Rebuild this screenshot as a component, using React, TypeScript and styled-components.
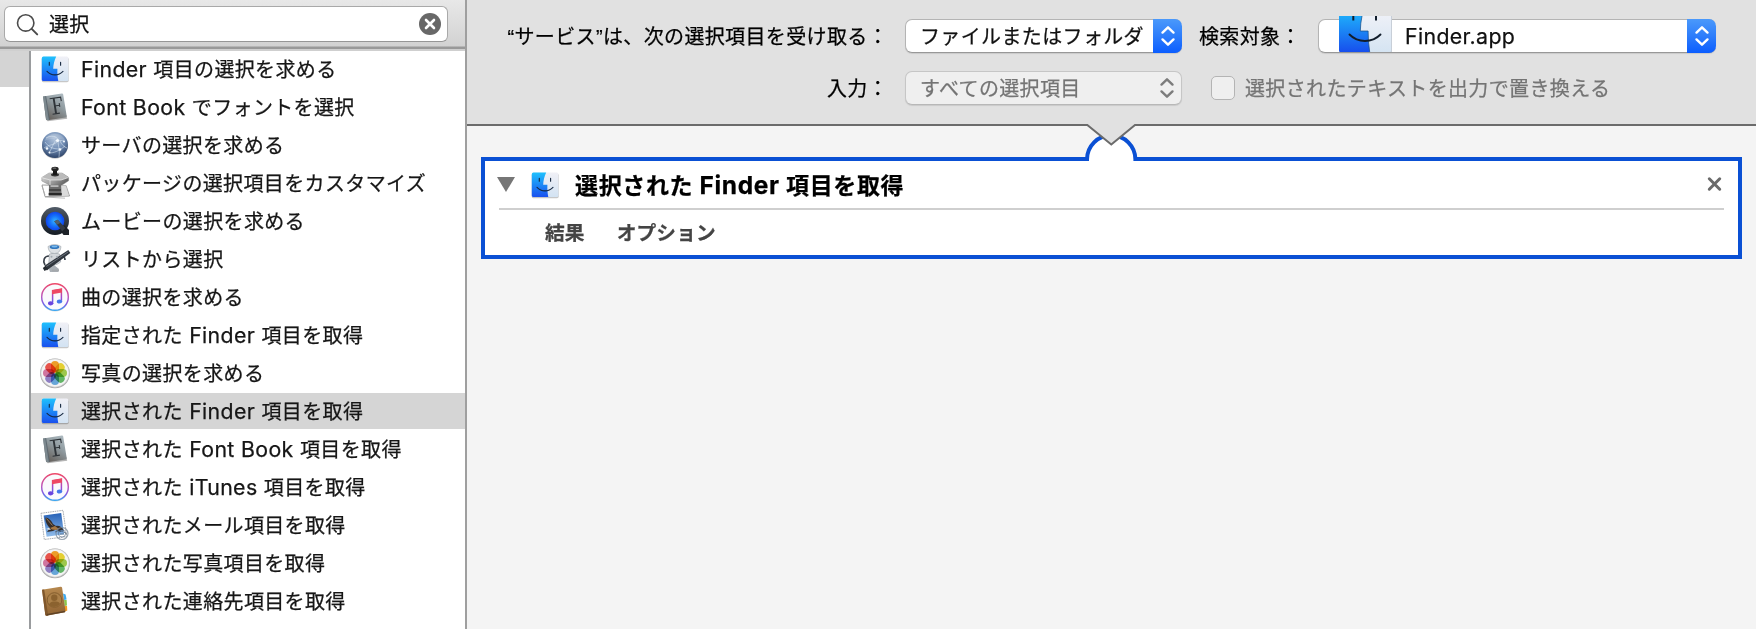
import React from "react";
import styled, { createGlobalStyle } from "styled-components";

const Global = createGlobalStyle`
  * { box-sizing: border-box; }
  body { margin: 0; overflow: hidden; background: #f4f4f4; }
`;

const Window = styled.div`
  display: grid;
  grid-template-columns: 467px 1fr;
  width: 1756px;
  height: 629px;
  overflow: hidden;
  color: #161616;
  font-family: Inter, "Noto Sans CJK JP", sans-serif;
  font-size: 20px;
  letter-spacing: 0.36px;
  white-space: pre;
  -webkit-text-stroke: 0.25px currentColor;
`;

const Latin = styled.span`
  font-size: 1.065em;
`;

const Quote = styled.span`
  font-family: "Liberation Sans", sans-serif;
`;

const Sidebar = styled.aside`
  display: flex;
  flex-direction: column;
  min-height: 0;
  border-right: 2px solid #9f9f9f;
  background: #fff;
`;

const SearchBar = styled.div`
  flex: none;
  height: 51px;
  padding: 6px 17px 0 4px;
  background: linear-gradient(#e8e8e8, #d2d2d2 46px, #999 47px, #999 49px, #cfcfcf 49px);
`;

const SearchField = styled.div`
  display: flex;
  align-items: center;
  height: 36px;
  padding: 0 6px 0 11px;
  border: 1px solid #a9a9a9;
  border-bottom-color: #969696;
  border-radius: 6px;
  background: #fff;
`;

const SearchText = styled.span`
  flex: 1;
  margin: 2px 0 0 10px;
  line-height: 30px;
  color: #111;
`;

const Columns = styled.div`
  flex: 1;
  display: grid;
  grid-template-columns: 31px 1fr;
`;

const Gutter = styled.div`
  border-right: 2px solid #9a9c9e;
`;

const GutterSelection = styled.div`
  height: 36px;
  background: #d4d4d4;
`;

const List = styled.ul`
  display: flex;
  flex-direction: column;
  gap: 2px;
  margin: 0;
  padding: 0;
  list-style: none;
`;

const Item = styled.li<{ $selected: boolean }>`
  display: flex;
  align-items: center;
  gap: 12px;
  height: 36px;
  padding-left: 10px;
  line-height: 36px;
  background: ${(p) => (p.$selected ? "#d5d5d5" : "transparent")};
`;

const ItemLabel = styled.span`
  padding-top: 1px;
`;

const Glyph = styled.svg`
  display: block;
  flex: none;
  overflow: visible;
`;

const Main = styled.main`
  display: flex;
  flex-direction: column;
  background: #f4f4f4;
`;

const Header = styled.header`
  display: flex;
  flex-direction: column;
  gap: 18px;
  height: 126px;
  padding-top: 19px;
  background: #e1e1e1;
  border-bottom: 2px solid #6b6b6b;
  color: #000;
`;

const FormRow = styled.div`
  display: flex;
  align-items: center;
  height: 34px;
  line-height: 34px;
`;

const FieldLabel = styled.span`
  width: 421px;
  margin-right: 17px;
  padding-top: 1px;
  text-align: right;
`;

const ScopeLabel = styled.span`
  width: 103px;
  margin: 1px 16px 0 17px;
`;

const Popup = styled.div<{ $width: number; $disabled?: boolean }>`
  display: flex;
  align-items: center;
  justify-content: space-between;
  width: ${(p) => p.$width}px;
  height: 34px;
  padding-left: 14px;
  border: 1px solid ${(p) => (p.$disabled ? "#c6c6c6" : "#b4b4b4")};
  border-bottom-color: ${(p) => (p.$disabled ? "#b8b8b8" : "#989898")};
  border-right-width: ${(p) => (p.$disabled ? 1 : 0)}px;
  border-radius: 7px;
  background: ${(p) => (p.$disabled ? "#efefef" : "#fff")};
  color: ${(p) => (p.$disabled ? "#747474" : "#111")};
  box-shadow: 0 1px 1px rgba(0, 0, 0, 0.1);
`;

const PopupText = styled.span`
  padding-top: 1px;
`;

const AppChoice = styled.span`
  display: flex;
  align-items: flex-end;
  gap: 12px;
  height: 36px;
  margin: -4px 0 0 6px;
`;

const AppName = styled(Latin)`
  margin-bottom: -1px;
`;

const Stepper = styled.span<{ $disabled?: boolean }>`
  display: flex;
  align-items: center;
  justify-content: center;
  width: 29px;
  height: 34px;
  margin: -1px 0;
  border-radius: 0 7px 7px 0;
  color: ${(p) => (p.$disabled ? "#7c7c7c" : "#fff")};
  background: ${(p) => (p.$disabled ? "none" : "linear-gradient(#4a99fb, #2d7dfb 50%, #0b5dff)")};
`;

const Checkbox = styled.span`
  width: 24px;
  height: 24px;
  margin: 0 10px 0 29px;
  border: 1px solid #b4b4b4;
  border-radius: 5px;
  background: #efefef;
`;

const CheckLabel = styled.span`
  padding-top: 1px;
  color: #747474;
`;

const Canvas = styled.section`
  position: relative;
  flex: 1;
  padding: 31px 14px 0;
`;

const Connector = styled.svg`
  position: absolute;
  left: 616px;
  top: -2px;
  z-index: 1;
`;

const Card = styled.article`
  height: 102px;
  border: 4px solid #0a50d4;
  background: #fff;
  padding: 0 14px;
`;

const CardHead = styled.div`
  display: flex;
  align-items: center;
  height: 49px;
  padding: 0 2px 0 0;
  border-bottom: 2px solid #cfcfcf;
`;

const CardTitle = styled.h1`
  flex: 1;
  margin: 2px 0 0 16px;
  font-size: 23px;
  line-height: 40px;
  font-weight: 700;
  letter-spacing: 0.63px;
  color: #000;
`;

const CardTabs = styled.div`
  display: flex;
  gap: 32px;
  padding: 1px 0 0 46px;
  line-height: 45px;
  font-size: 19.7px;
  letter-spacing: 0.15px;
  font-weight: 700;
  color: #444;
`;

const FinderArt = ({ size = 28 }: { size?: number }) => (
  <Glyph width={size} height={size} viewBox="0 0 28 28">
    <defs>
      <linearGradient id="fb" x1="0" y1="0" x2="0" y2="1">
        <stop offset="0" stopColor="#1fc0fd" />
        <stop offset="1" stopColor="#1a50ee" />
      </linearGradient>
      <linearGradient id="fw" x1="0" y1="0" x2="0" y2="1">
        <stop offset="0" stopColor="#f0f0f6" />
        <stop offset="1" stopColor="#d3e3f3" />
      </linearGradient>
    </defs>
    <rect x=".7" y="2.600" width="27" height="24.600" rx="1.600" fill="#000" opacity=".22" />
    <rect x=".8" y="1.6" width="26.6" height="24.4" rx="1.6" fill="url(#fw)" />
    <path d="M2.4 1.6H15.2C13.3 5.5 12.4 9.5 12.2 13.7h4.2c-.2 4.5.1 8.4.9 12.3H2.4A1.6 1.6 0 0 1 .8 24.4V3.2A1.6 1.6 0 0 1 2.4 1.6z" fill="url(#fb)" />
    <path d="M8.3 7.2v3.1M19.6 7.2v3.1M6 16.300c4.400 4.700 11.500 4.700 16 0" fill="none" stroke="#14263e" strokeWidth="1.100" strokeLinecap="round" />
  </Glyph>
);

const FinderCrop = () => (
  <Glyph width="54" height="36" viewBox="0 0 54 36">
    <defs>
      <linearGradient id="cb" x1="0" y1="0" x2="0" y2="1">
        <stop offset="0" stopColor="#1eaafa" />
        <stop offset="1" stopColor="#174fed" />
      </linearGradient>
      <linearGradient id="cw" x1="0" y1="0" x2="0" y2="1">
        <stop offset="0" stopColor="#edf0f7" />
        <stop offset="1" stopColor="#d5e4f2" />
      </linearGradient>
    </defs>
    <path d="M0 0h53v36H0z" fill="#c8cfd8" />
    <path d="M.5 0H52v34.5q0 1.5-1.5 1.5H.5z" fill="url(#cw)" />
    <path d="M0 0h23q-1.500 7-1.700 15h7.800q0 11 1.600 21H1.500Q0 36 0 34.500z" fill="url(#cb)" />
    <path d="M23 0q-1.500 7-1.700 15h7.800q0 11 1.600 21" fill="none" stroke="#164b82" strokeOpacity=".7" strokeWidth="1" />
    <path d="M14.300 0v4.600M37 0v4.600" stroke="#111d2b" strokeWidth="2" />
    <path d="M10.500 18.500c8.500 8.600 22.500 8.600 31 0" fill="none" stroke="#111d2b" strokeWidth="1.900" strokeLinecap="round" />
  </Glyph>
);

const FontBookArt = () => (
  <Glyph width="28" height="28" viewBox="0 0 28 28">
    <defs>
      <linearGradient id="bk" x1="1" y1="0" x2=".4" y2="1">
        <stop offset="0" stopColor="#b3c0c7" />
        <stop offset=".5" stopColor="#8f9a9f" />
        <stop offset="1" stopColor="#686460" />
      </linearGradient>
    </defs>
    <path d="M6.600 28.200l19.600-2.400-.7-3.500-19.600 2z" fill="#777" opacity=".55" />
    <path d="M2 3.600L20.800 .5q1.200-.2 1.400 1l3.500 21.600q.2 1.200-1 1.400L6.400 27.300q-1.200.1-1.400-1z" fill="url(#bk)" />
    <path d="M2 3.600l2.600-.5L8.300 27l-1.900.3q-1.200.1-1.400-1z" fill="#7d898f" />
    <path d="M4.700 3.200L8.300 27" stroke="#56616a" strokeWidth=".8" />
    <path d="M8.600 5.700l11-1.600.7 4M13.500 13l5-.8M18.200 10.200l.6 3.700M11.600 21.200l7.300-1.100" fill="none" stroke="#2e3338" strokeWidth="1.100" />
    <path d="M12.600 5.200l2.500 15.500" stroke="#2e3338" strokeWidth="1.900" />
  </Glyph>
);

const ServerArt = () => (
  <Glyph width="28" height="28" viewBox="0 0 28 28">
    <defs>
      <radialGradient id="gl" cx=".48" cy=".28" r=".75">
        <stop offset="0" stopColor="#b1c3da" />
        <stop offset=".5" stopColor="#728eb5" />
        <stop offset="1" stopColor="#273d62" />
      </radialGradient>
    </defs>
    <circle cx="14" cy="14.800" r="13" fill="#000" opacity=".22" />
    <circle cx="14" cy="14" r="13" fill="url(#gl)" />
    <path d="M5 7c5-3 11-2 12 2l6 1M3 17c6-4 8-2 13-6M4 11c4 5 7 7 15 7M15 9c-3 4-4 8-7 13M17 9c0 6 2 9 1 17M19 10c2 4 4 6 7 7M8 22c5 0 10-2 16-7" fill="none" stroke="#e3edf7" strokeWidth=".7" opacity=".75" />
    <g fill="#f5faff"><circle cx="16.500" cy="9.500" r="1.600" /><circle cx="6" cy="17.500" r="1.300" /><circle cx="19" cy="18.500" r="1.300" /><circle cx="8.500" cy="21.500" r="1" /><circle cx="23" cy="10.500" r="1" /></g>
    <path d="M3.500 10a11.200 11.200 0 0 1 21 0c-6-3-15-3-21 0z" fill="#fff" opacity=".17" />
  </Glyph>
);

const PackageArt = () => (
  <Glyph width="28" height="28" viewBox="0 0 28 28">
    <defs>
      <linearGradient id="pm" x1="0" x2="1" y2=".5">
        <stop offset="0" stopColor="#ddd" />
        <stop offset=".5" stopColor="#aaa" />
        <stop offset="1" stopColor="#686868" />
      </linearGradient>
    </defs>
    <path d="M1 16l3 11.600 24.500-.6-3.500-10.500z" fill="#fff" stroke="#858585" strokeWidth=".8" />
    <path d="M4 28l20 1.200M4 26l-3-9" stroke="#aaa" strokeWidth=".8" />
    <path d="M16 16h9l2.800 10.500-7-.4z" fill="#ccc" opacity=".7" />
    <path d="M8 14l12 0 .6 12.200H7.800z" fill="#6b6b6b" />
    <path d="M9.500 14h8v4h-8z" fill="#b8b8b8" />
    <path d="M8 20h12v2H8z" fill="#454545" /><path d="M7.700 24h13v2.500h-13z" fill="#292929" />
    <path d="M.8 8.500L8 4h13l6.600 4.300v3.500L21 16H8.500L.8 12z" fill="url(#pm)" stroke="#777" strokeWidth=".4" />
    <path d="M.9 8.500L8 4h13l6.500 4.300L20 11H9z" fill="#bbb" />
    <path d="M1 8.700L9 11h11l7.500-2.500M9 11v5" fill="none" stroke="#eee" strokeWidth=".7" />
    <ellipse cx="14" cy="5.700" rx="4" ry="1.700" fill="#333" /><path d="M12 2h4v4h-4z" fill="#181818" /><ellipse cx="14" cy="0" rx="3.700" ry="2.200" fill="#222" /><ellipse cx="13.500" cy="-.8" rx="2" ry=".6" fill="#777" />
  </Glyph>
);

const QuickTimeArt = () => (
  <Glyph width="28" height="28" viewBox="0 0 28 28">
    <defs>
      <linearGradient id="qr" x1="0" y1="0" x2="0" y2="1"><stop offset="0" stopColor="#515b67" /><stop offset="1" stopColor="#141b23" /></linearGradient>
      <radialGradient id="qb" cy=".5"><stop offset="0" stopColor="#35b6ff" /><stop offset=".55" stopColor="#1673fb" /><stop offset="1" stopColor="#0f45ee" /></radialGradient>
    </defs>
    <circle cx="14" cy="14" r="14" fill="url(#qr)" />
    <path d="M16 19l7-1 5 5v5h-5.500z" fill="#1d2228" />
    <circle cx="14" cy="14" r="9.300" fill="url(#qb)" />
    <path d="M13.200 14.200l3.500-1.500 7.800 8.300-3.300 3.200z" fill="#343b43" />
    <path d="M13.200 14.200l3.500-1.500 2.800 3-3.500 2z" fill="#52606d" />
  </Glyph>
);

const AutomatorArt = () => (
  <Glyph width="28" height="28" viewBox="0 0 28 28">
    <path d="M8 11c-5 0-6.500 5-4 9M20 11c3 0 4 2 4 4" fill="none" stroke="#394049" strokeWidth="1.700" />
    <path d="M8 24l5-4 5 4-1 3H9z" fill="#aab0b6" />
    <path d="M8.500 9q5-2 10 0l1.200 8q-6 5-12 2z" fill="#d3d7db" stroke="#8b939a" strokeWidth=".5" />
    <path d="M7 1.500q6.500-4 13 0-.5 7-6.500 7T7 1.500z" fill="#dde1e5" stroke="#9aa2a9" strokeWidth=".6" />
    <ellipse cx="13.500" cy="2" rx="4.800" ry="2" fill="#3377bd" /><ellipse cx="13.500" cy="1.500" rx="3" ry="1" fill="#78b9ed" />
    <path d="M3.500 20.800L27.300 5l2 3L5.800 25.600z" fill="#30363e" />
    <path d="M4.500 22L27.300 6.800" stroke="#79818b" strokeWidth=".8" />
    <path d="M1.800 23l3-2.200L7 24l-3.500 2z" fill="#252a30" />
    <circle cx="10.500" cy="11.800" r="1" fill="#a1a9b0" /><circle cx="16" cy="11.800" r="1" fill="#a1a9b0" />
    <path d="M11 25.500h7" stroke="#a4a8ac" strokeWidth="2" />
  </Glyph>
);

const ITunesArt = () => (
  <Glyph width="28" height="28" viewBox="0 0 28 28">
    <defs>
      <linearGradient id="ir" x1=".55" y1="0" x2=".5" y2="1"><stop offset="0" stopColor="#ef4868" /><stop offset=".45" stopColor="#c253b6" /><stop offset=".75" stopColor="#7c5ae8" /><stop offset="1" stopColor="#38a5f2" /></linearGradient>
      <linearGradient id="inn" gradientUnits="userSpaceOnUse" x1="15" y1="5" x2="14" y2="23"><stop offset="0" stopColor="#f3495e" /><stop offset=".5" stopColor="#9f4cd0" /><stop offset="1" stopColor="#3c6df0" /></linearGradient>
    </defs>
    <circle cx="14" cy="14.500" r="14" fill="#000" opacity=".15" />
    <circle cx="14" cy="14" r="13.300" fill="#fafafd" stroke="url(#ir)" strokeWidth="1.400" />
    <path d="M11.600 19.500V7.700l8.800-1.500v11.500" fill="none" stroke="url(#inn)" strokeWidth="1.500" />
    <path d="M11 7.200l10-1.700v4L11 11.200z" fill="#ee4864" />
    <ellipse cx="9.700" cy="20.300" rx="2.700" ry="2.100" fill="#6b45df" /><ellipse cx="18.500" cy="18.500" rx="2.700" ry="2.100" fill="#4478eb" />
  </Glyph>
);

const PETALS = ["#f79a14", "#efd51f", "#9bcb3c", "#55b65b", "#5ba4df", "#8b78c7", "#d66b9c", "#f0443a"];

const Petal = styled.rect`
  mix-blend-mode: multiply;
  opacity: 0.9;
`;

const PhotosArt = () => (
  <Glyph width="28" height="28" viewBox="0 0 28 28">
    <circle cx="14" cy="14.400" r="14.900" fill="#a9a9a9" />
    <circle cx="14" cy="14" r="14.200" fill="#f4f4f4" stroke="#c6c6c6" strokeWidth=".7" />
    {PETALS.map((c, i) => (
      <Petal key={c} x="10" y="2" width="8" height="11.500" rx="4" fill={c} transform={`rotate(${i * 45} 14 14)`} />
    ))}
  </Glyph>
);

const MailArt = () => (
  <Glyph width="28" height="28" viewBox="0 0 28 28">
    <defs><linearGradient id="ms" x1="0" y1="0" x2="0" y2="1"><stop offset="0" stopColor="#2661b7" /><stop offset="1" stopColor="#91bdeb" /></linearGradient></defs>
    <path d="M0 2.300L22-.7l3.700 26.300L3.300 28.500z" fill="#fff" stroke="#a9adb2" strokeWidth="1" strokeDasharray="1.600 .7" />
    <path d="M2.600 4.500L20.200 2l2.900 21.200L5.600 25.700z" fill="url(#ms)" />
    <path d="M4.500 6.500c3 0 6 3 7.500 6.500l3 2c3-.8 6 1 8 4.500l-4-.5 1 2-5-2.500-3 1.500-6 1 3-4c-2.500-2-5-6.500-4.500-10.500z" fill="#352d29" />
    <path d="M9 17l5-2 4 3-3 1-4-.6z" fill="#a87841" /><path d="M5.500 7.500l6 7" stroke="#9a7b59" strokeWidth="1" /><path d="M5 18l3-1 2 2z" fill="#f1eee5" />
    <circle cx="21" cy="22.500" r="6" fill="none" stroke="#7a8a99" strokeWidth="1.200" opacity=".75" /><circle cx="21" cy="22.500" r="3.600" fill="none" stroke="#405a76" strokeWidth=".8" opacity=".7" />
    <path d="M14 21q5-3 12 2M19 23h4" fill="none" stroke="#405060" strokeWidth=".9" opacity=".7" />
  </Glyph>
);

const ContactsArt = () => (
  <Glyph width="28" height="28" viewBox="0 0 28 28">
    <defs><linearGradient id="cg" x1="0" y1="0" x2=".2" y2="1"><stop offset="0" stopColor="#ba8c51" /><stop offset="1" stopColor="#936635" /></linearGradient></defs>
    <path d="M21 3l4 19-2 4z" fill="#eee" />
    <path d="M22 6.500l2.600 1 1 5-2.600.5z" fill="#3faaf0" /><path d="M23 13l2.600 0 .4 5.500-2.400.5z" fill="#8bc64a" /><path d="M23.500 19l2.500 0 .3 4.500-2.300 1z" fill="#f49b22" />
    <path d="M1 2.800L19.500-.2q1.300-.2 1.600 1l3.400 23q.2 1.300-1 1.500L5.800 28.700q-1.300.1-1.500-1z" fill="url(#cg)" />
    <path d="M1 2.800l2.200-.3 4 26-1.400.2q-1.300.1-1.500-1z" fill="#80572c" />
    <path d="M5.500 28.500L24 25.300l-.1-1.500L5.500 27z" fill="#604326" />
    <circle cx="13.500" cy="13" r="7.300" fill="#ab8049" stroke="#855e2e" strokeWidth="1" />
    <circle cx="13.300" cy="10.800" r="3.200" fill="#8b622f" /><path d="M8 18q.5-3 4-3.600h3q3.400.3 4 2.600-5 5.500-11 1z" fill="#8b622f" />
  </Glyph>
);

const Chevrons = () => (
  <Glyph width="16" height="22" viewBox="0 0 16 22" fill="none" stroke="currentColor" strokeWidth="2.400" strokeLinecap="round" strokeLinejoin="round">
    <path d="M2.500 7.600L8 2.300l5.500 5.300M2.500 14.400L8 19.700l5.500-5.300" />
  </Glyph>
);

const Mixed = ({ text }: { text: string }) => (
  <>
    {text.split(/([A-Za-z. ]+)/).map((part, i) => (i % 2 ? <Latin key={i}>{part}</Latin> : part))}
  </>
);

const ACTIONS: { label: string; Art: React.FC; selected?: boolean }[] = [
  { label: "Finder 項目の選択を求める", Art: FinderArt },
  { label: "Font Book でフォントを選択", Art: FontBookArt },
  { label: "サーバの選択を求める", Art: ServerArt },
  { label: "パッケージの選択項目をカスタマイズ", Art: PackageArt },
  { label: "ムービーの選択を求める", Art: QuickTimeArt },
  { label: "リストから選択", Art: AutomatorArt },
  { label: "曲の選択を求める", Art: ITunesArt },
  { label: "指定された Finder 項目を取得", Art: FinderArt },
  { label: "写真の選択を求める", Art: PhotosArt },
  { label: "選択された Finder 項目を取得", Art: FinderArt, selected: true },
  { label: "選択された Font Book 項目を取得", Art: FontBookArt },
  { label: "選択された iTunes 項目を取得", Art: ITunesArt },
  { label: "選択されたメール項目を取得", Art: MailArt },
  { label: "選択された写真項目を取得", Art: PhotosArt },
  { label: "選択された連絡先項目を取得", Art: ContactsArt },
];

export default function App() {
  return (
    <Window>
      <Global />
      <Sidebar>
        <SearchBar>
          <SearchField>
            <Glyph width="23" height="23" viewBox="0 0 23 23" fill="none" stroke="#4b4b4b">
              <circle cx="9.700" cy="9.900" r="8.200" strokeWidth="1.600" />
              <path d="M15.700 15.900l5.500 5.500" strokeWidth="2" strokeLinecap="round" />
            </Glyph>
            <SearchText>選択</SearchText>
            <Glyph width="22" height="22" viewBox="0 0 22 22">
              <circle cx="11" cy="11" r="11" fill="#686868" />
              <path d="M7 7l8 8M15 7l-8 8" stroke="#fff" strokeWidth="2.600" strokeLinecap="round" />
            </Glyph>
          </SearchField>
        </SearchBar>
        <Columns>
          <Gutter>
            <GutterSelection />
          </Gutter>
          <List>
            {ACTIONS.map(({ label, Art, selected }) => (
              <Item key={label} $selected={!!selected}>
                <Art />
                <ItemLabel><Mixed text={label} /></ItemLabel>
              </Item>
            ))}
          </List>
        </Columns>
      </Sidebar>
      <Main>
        <Header>
          <FormRow>
            <FieldLabel><Quote>“</Quote>サービス<Quote>”</Quote>は、次の選択項目を受け取る：</FieldLabel>
            <Popup $width={277}>
              <PopupText>ファイルまたはフォルダ</PopupText>
              <Stepper><Chevrons /></Stepper>
            </Popup>
            <ScopeLabel>検索対象：</ScopeLabel>
            <Popup $width={398}>
              <AppChoice>
                <FinderCrop />
                <AppName>Finder.app</AppName>
              </AppChoice>
              <Stepper><Chevrons /></Stepper>
            </Popup>
          </FormRow>
          <FormRow>
            <FieldLabel>入力：</FieldLabel>
            <Popup $width={277} $disabled>
              <PopupText>すべての選択項目</PopupText>
              <Stepper $disabled><Chevrons /></Stepper>
            </Popup>
            <Checkbox />
            <CheckLabel>選択されたテキストを出力で置き換える</CheckLabel>
          </FormRow>
        </Header>
        <Canvas>
          <Connector width="56" height="38" viewBox="0 0 56 38">
            <path d="M4 37V35.500a24.200 24.200 0 0 1 48.400 0V37z" fill="#fff" />
            <path d="M4 37V35.500a24.200 24.200 0 0 1 48.400 0V37" fill="none" stroke="#0a50d4" strokeWidth="4" />
            <path d="M3 0h50v1L28.300 20.700 4 1z" fill="#e1e1e1" />
            <path d="M3 1h1.300L28.300 20.500 52 1h1.500" fill="none" stroke="#6b6b6b" strokeWidth="2" />
          </Connector>
          <Card>
            <CardHead>
              <Glyph width="32" height="18" viewBox="0 0 32 18">
                <path d="M-2 1h18L7 16z" fill="#767676" />
              </Glyph>
              <FinderArt />
              <CardTitle><Mixed text="選択された Finder 項目を取得" /></CardTitle>
              <Glyph width="15" height="15" viewBox="0 0 15 15">
                <path d="M2.300 1.800l10.400 10.400M12.700 1.800L2.300 12.200" stroke="#6a6a6a" strokeWidth="3" strokeLinecap="round" />
              </Glyph>
            </CardHead>
            <CardTabs>
              <span>結果</span>
              <span>オプション</span>
            </CardTabs>
          </Card>
        </Canvas>
      </Main>
    </Window>
  );
}
